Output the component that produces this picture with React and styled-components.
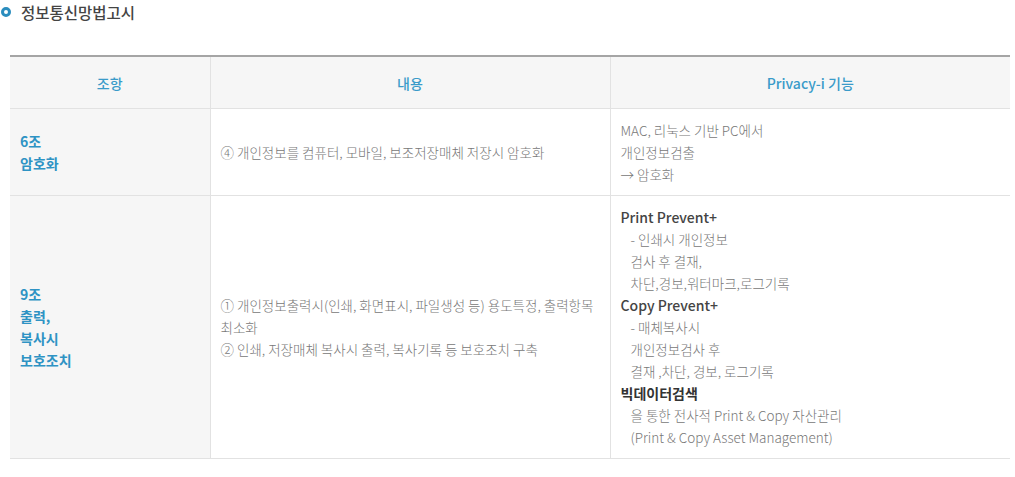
import React from "react";
import styled, { createGlobalStyle } from "styled-components";

const GlobalStyle = createGlobalStyle`
  body {
    margin: 0;
    background: #fff;
    font-family: "Noto Sans CJK KR", "Noto Sans", sans-serif;
  }
`;

const Page = styled.div`
  padding: 2px 5px 0 1px;
`;

const Title = styled.h3`
  display: flex;
  align-items: center;
  gap: 10px;
  margin: 0 0 33px;
  font-size: 15.5px;
  font-weight: 500;
  color: #444;
  line-height: 20px;
  letter-spacing: 0;
`;

const Dot = styled.span`
  width: 10px;
  height: 10px;
  border-radius: 50%;
  border: 3px solid #2b8dbe;
  box-sizing: border-box;
  flex: none;
`;

const Table = styled.table`
  margin-left: 9px;
  width: 1000px;
  border-collapse: collapse;
  border-top: 2px solid #a5a5a5;
  border-bottom: 1px solid #e2e2e2;
  font-size: 13.5px;
  line-height: 22px;
  letter-spacing: 0;
  color: #777;
  table-layout: fixed;
  word-break: keep-all;
`;

const Th = styled.th`
  height: 51px;
  padding: 0 10px;
  background: #f6f6f6;
  color: #3a9bc9;
  font-size: 14px;
  font-weight: 500;
  text-align: center;
  border-bottom: 1px solid #e2e2e2;
  & + & {
    border-left: 1px solid #e2e2e2;
  }
`;

const Td = styled.td`
  padding: 10px;
  vertical-align: middle;
  border-bottom: 1px solid #e2e2e2;
  background: ${(p) => (p.$head ? "#f6f6f6" : "#fff")};
  color: ${(p) => (p.$head ? "#2e93c4" : "#777")};
  font-weight: ${(p) => (p.$head ? 700 : 300)};
  font-size: ${(p) => (p.$head ? "14px" : "13.5px")};
  & + & {
    border-left: 1px solid #e2e2e2;
  }
`;

const Line = styled.div`
  padding-left: ${(p) => (p.$indent ? "10px" : "0")};
`;

const Strong = styled.div`
  color: ${(p) => (p.$bold ? "#333" : "#444")};
  font-weight: ${(p) => (p.$bold ? 700 : 500)};
  font-size: 14px;
`;

export default function App() {
  return (
    <Page>
      <GlobalStyle />
      <Title>
        <Dot />
        정보통신망법고시
      </Title>
      <Table>
        <colgroup>
          <col style={{ width: 200 }} />
          <col style={{ width: 400 }} />
          <col style={{ width: 400 }} />
        </colgroup>
        <thead>
          <tr>
            <Th>조항</Th>
            <Th>내용</Th>
            <Th>Privacy-i 기능</Th>
          </tr>
        </thead>
        <tbody>
          <tr>
            <Td $head>
              <Line>6조</Line>
              <Line>암호화</Line>
            </Td>
            <Td>④ 개인정보를 컴퓨터, 모바일, 보조저장매체 저장시 암호화</Td>
            <Td>
              <Line>MAC, 리눅스 기반 PC에서</Line>
              <Line>개인정보검출</Line>
              <Line>→ 암호화</Line>
            </Td>
          </tr>
          <tr>
            <Td $head>
              <Line>9조</Line>
              <Line>출력,</Line>
              <Line>복사시</Line>
              <Line>보호조치</Line>
            </Td>
            <Td>
              <Line>① 개인정보출력시(인쇄, 화면표시, 파일생성 등) 용도특정, 출력항목 최소화</Line>
              <Line>② 인쇄, 저장매체 복사시 출력, 복사기록 등 보호조치 구축</Line>
            </Td>
            <Td>
              <Strong>Print Prevent+</Strong>
              <Line $indent>- 인쇄시 개인정보</Line>
              <Line $indent>검사 후 결재,</Line>
              <Line $indent>차단,경보,워터마크,로그기록</Line>
              <Strong>Copy Prevent+</Strong>
              <Line $indent>- 매체복사시</Line>
              <Line $indent>개인정보검사 후</Line>
              <Line $indent>결재 ,차단, 경보, 로그기록</Line>
              <Strong $bold>빅데이터검색</Strong>
              <Line $indent>을 통한 전사적 Print &amp; Copy 자산관리</Line>
              <Line $indent>(Print &amp; Copy Asset Management)</Line>
            </Td>
          </tr>
        </tbody>
      </Table>
    </Page>
  );
}
